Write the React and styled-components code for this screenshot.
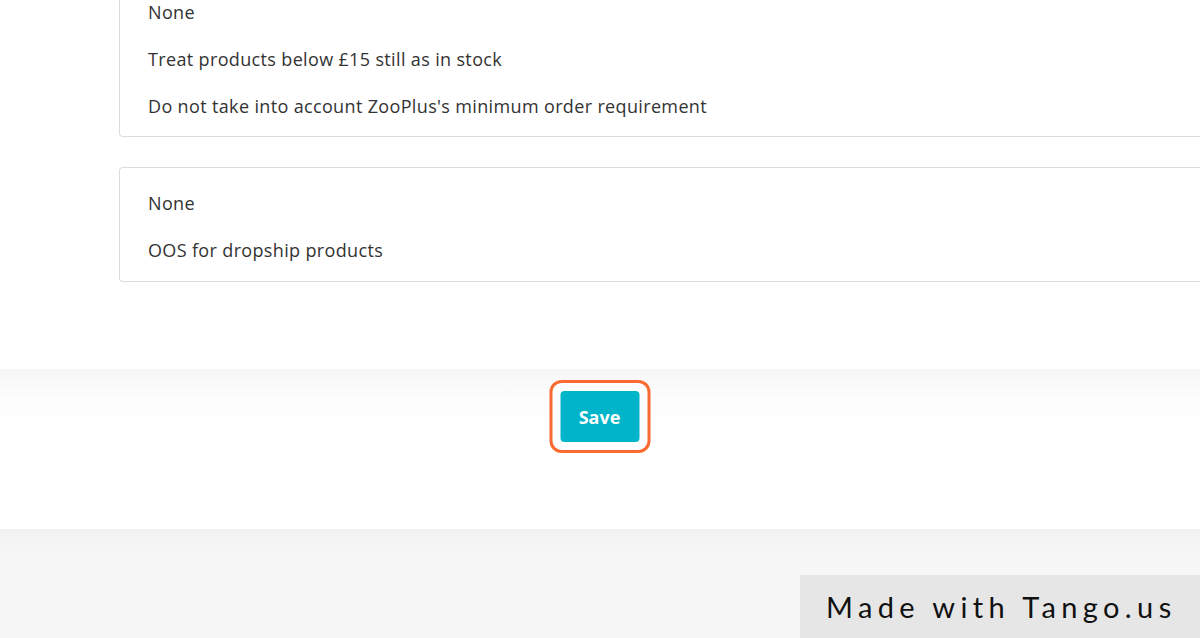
import React from "react";
import styled, { createGlobalStyle } from "styled-components";

const GlobalStyle = createGlobalStyle`
  html, body {
    margin: 0;
    padding: 0;
    background: #ffffff;
    overflow: hidden;
  }
  body {
    font-family: "Open Sans", "Liberation Sans", sans-serif;
  }
`;

const Page = styled.div`
  display: flex;
  flex-direction: column;
  width: 1200px;
  height: 638px;
  overflow: hidden;
  background: #f7f7f7;
`;

const Content = styled.div`
  display: flex;
  flex-direction: column;
  gap: 30px;
  margin-top: -24px;
  padding: 0 0 87px 119px;
  background: #ffffff;
`;

const OptionList = styled.div`
  display: flex;
  flex-direction: column;
  padding: ${p => p.$pad};
  margin-right: -10px;
  border: 1px solid #dcdcdc;
  border-right: none;
  border-radius: 4px 0 0 4px;
  background: #ffffff;
`;

const Option = styled.div`
  height: 47px;
  display: flex;
  align-items: center;
  padding-left: 28px;
  font-size: 18px;
  letter-spacing: 0.35px;
  color: #333333;
`;

const Footer = styled.div`
  display: flex;
  justify-content: center;
  align-items: flex-start;
  height: 160px;
  padding-top: 11px;
  box-sizing: border-box;
  background: linear-gradient(#f6f6f6 0px, #fdfdfd 30px, #ffffff 60px);
`;

const Highlight = styled.div`
  display: flex;
  padding: 8px;
  border: 3px solid #fb6a30;
  border-radius: 12px;
  background: #ffffff;
  transform: translateX(-0.5px);
`;

const SaveButton = styled.button`
  width: 79px;
  height: 51px;
  border: none;
  border-radius: 4px;
  background: #00b4c9;
  color: #ffffff;
  font-family: "Open Sans", "Liberation Sans", sans-serif;
  font-weight: 700;
  font-size: 18px;
  cursor: pointer;
`;

const Bottom = styled.div`
  flex: 1;
  display: flex;
  justify-content: flex-end;
  align-items: flex-end;
  background: linear-gradient(#f2f2f2 0px, #f7f7f7 30px);
`;

const Badge = styled.div`
  width: 400px;
  height: 63px;
  display: flex;
  align-items: center;
  padding-left: 26px;
  box-sizing: border-box;
  background: #e6e6e6;
  color: #111111;
  font-family: Lato, "DejaVu Sans", sans-serif;
  font-size: 29px;
  letter-spacing: 5.4px;
  white-space: nowrap;
`;

export default function App() {
  return (
    <>
      <GlobalStyle />
      <Page>
        <Content>
          <OptionList $pad="11px 0 7px 0">
            <Option>None</Option>
            <Option>Treat products below £15 still as in stock</Option>
            <Option>Do not take into account ZooPlus's minimum order requirement</Option>
          </OptionList>
          <OptionList $pad="11px 0 8px 0">
            <Option>None</Option>
            <Option>OOS for dropship products</Option>
          </OptionList>
        </Content>
        <Footer>
          <Highlight>
            <SaveButton>Save</SaveButton>
          </Highlight>
        </Footer>
        <Bottom>
          <Badge>Made with Tango.us</Badge>
        </Bottom>
      </Page>
    </>
  );
}
